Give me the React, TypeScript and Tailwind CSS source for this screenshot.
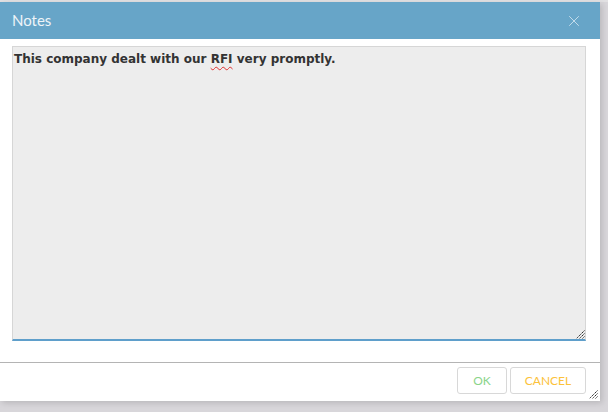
import { X } from "lucide-react";

const Grip = ({ className }: { className?: string }) => (
  <svg width="10" height="10" viewBox="0 0 10 10" className={className}>
    <path d="M9.5 1.5 L1.5 9.5 M9.5 4.5 L4.5 9.5 M9.5 7.5 L7.5 9.5" stroke="#222" strokeWidth="1" strokeDasharray="1.5 0.7" />
  </svg>
);

const App = () => {
  return (
    <div className="w-[608px] h-[412px] bg-[#d8d6da] overflow-hidden" style={{ fontFamily: "Lato, sans-serif" }}>
      <div className="h-[2px] bg-[#e2e1e3]" />
      <div className="relative w-[600px] h-[399px] bg-white flex flex-col shadow-[2px_2px_6px_rgba(0,0,0,0.15)]">
        <div className="h-[37px] bg-[#67a5c8] flex items-center justify-between pl-3 pr-[17px]">
          <span className="text-[15px] text-[#eef4f8]">Notes</span>
          <X size={18} strokeWidth={1} className="text-[#e0edf5]" />
        </div>
        <div className="pl-3 pr-[14px] pt-[7px] pb-[21px] border-b border-[#b4b4b4]">
          <div className="relative h-[295px] bg-[#ededed] border border-[#d6d6d6] border-b-2 border-b-[#5f9fcb] px-[1px] py-[3px]">
            <p
              className="text-[12px] font-bold text-[#333]"
              style={{ fontFamily: "'DejaVu Sans', Verdana, sans-serif" }}
            >
              This company dealt with our{" "}
              <span className="underline decoration-wavy decoration-[#e03030] decoration-1 underline-offset-[3px]">RFI</span>{" "}
              very promptly.
            </p>
            <Grip className="absolute right-0 bottom-0" />
          </div>
        </div>
        <div className="flex justify-end gap-[3px] pr-[14px] pt-[4px]">
          <button className="w-[50px] h-[27px] rounded-[3px] border border-[#d8d8d8] text-[12px] text-[#8ad48a] bg-white">
            OK
          </button>
          <button className="w-[76px] h-[27px] rounded-[3px] border border-[#d8d8d8] text-[12px] text-[#fcc23a] bg-white">
            CANCEL
          </button>
        </div>
        <Grip className="absolute right-[2px] bottom-[2px]" />
      </div>
    </div>
  );
};

export default App;
